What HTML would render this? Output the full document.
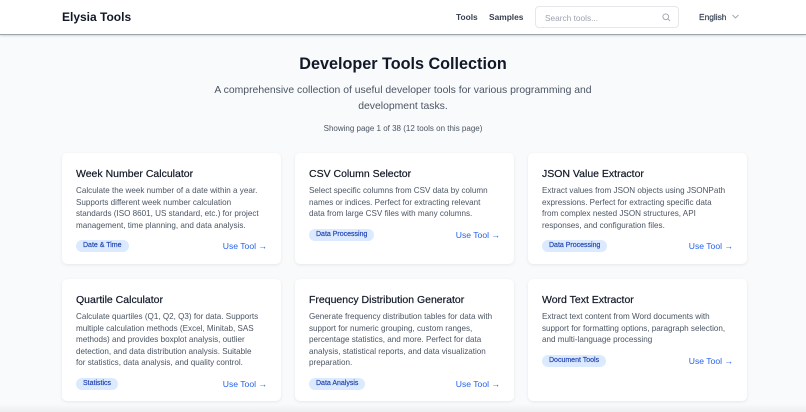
<!DOCTYPE html>
<html><head><meta charset="utf-8"><style>
*{box-sizing:border-box;margin:0;padding:0}
body{width:806px;height:412px;overflow:hidden;background:#f9fafb;font-family:"Liberation Sans",sans-serif;color:#111827;position:relative}
.hdr{height:35px;background:#fff;border-bottom:1px solid #9ca3af;box-shadow:0 1px 2px rgba(0,0,0,.15);position:relative}
.logo{position:absolute;left:62px;top:10px;font-size:12px;font-weight:bold;color:#111827}
.nav{position:absolute;top:12px;font-size:8.4px;font-weight:bold;color:#374151}
.search{position:absolute;left:535px;top:6px;width:144px;height:22px;border:1px solid #e5e7eb;border-radius:4px;background:#fff}
.search span{position:absolute;left:9px;top:6px;font-size:8.3px;color:#9ca3af}
.search svg{position:absolute;right:7px;top:6px}
h1{position:absolute;top:55px;left:0;width:806px;text-align:center;font-size:16.2px;font-weight:bold;color:#111827}
.sub{position:absolute;top:83px;left:213px;width:380px;text-align:center;font-size:10.4px;line-height:16px;color:#4b5563}
.show{position:absolute;top:124px;left:0;width:806px;text-align:center;font-size:8px;color:#4b5563}
.card{position:absolute;width:219px;background:#fff;border-radius:5px;box-shadow:0 1px 3px rgba(0,0,0,.08);padding:14px 14px 0}
.card h3{font-size:10.5px;font-weight:normal;color:#111827;line-height:14px;margin-bottom:4px;-webkit-text-stroke:.2px #111827}
.card p{font-size:8.1px;line-height:11.5px;color:#4b5563;width:184px}
.ft{display:flex;justify-content:space-between;align-items:center;margin-top:9px}
.tag{background:#dbeafe;color:#1e40af;font-size:7px;border-radius:6px;padding:2px 7px;line-height:8px;-webkit-text-stroke:.15px #1e40af}
.use{color:#2563eb;font-size:8.6px;margin-right:0px}
</style></head><body>
<div class="hdr">
<div class="logo">Elysia Tools</div>
<div class="nav" style="left:456px">Tools</div>
<div class="nav" style="left:489px">Samples</div>
<div class="search"><span>Search tools...</span><svg width="9" height="9" viewBox="0 0 10 10"><circle cx="4.2" cy="4.2" r="3.2" fill="none" stroke="#9ca3af" stroke-width="1"/><path d="M6.6 6.6L9 9" stroke="#9ca3af" stroke-width="1"/></svg></div>
<div class="nav" style="left:699px;font-weight:normal;color:#374151;-webkit-text-stroke:.2px #374151">English</div>
<svg style="position:absolute;left:732px;top:14px" width="7" height="5" viewBox="0 0 7 5"><path d="M.5 1L3.5 4L6.5 1" fill="none" stroke="#9ca3af" stroke-width=".9"/></svg>
</div>
<h1>Developer Tools Collection</h1>
<div class="sub">A comprehensive collection of useful developer tools for various programming and development tasks.</div>
<div class="show">Showing page 1 of 38 (12 tools on this page)</div>

<div class="card" style="left:62px;top:153px;height:111px"><h3>Week Number Calculator</h3><p>Calculate the week number of a date within a year. Supports different week number calculation standards (ISO 8601, US standard, etc.) for project management, time planning, and data analysis.</p><div class="ft"><span class="tag">Date &amp; Time</span><span class="use">Use Tool →</span></div></div>
<div class="card" style="left:295px;top:153px;height:111px"><h3>CSV Column Selector</h3><p>Select specific columns from CSV data by column names or indices. Perfect for extracting relevant<br>data from large CSV files with many columns.</p><div class="ft"><span class="tag">Data Processing</span><span class="use">Use Tool →</span></div></div>
<div class="card" style="left:528px;top:153px;height:111px"><h3>JSON Value Extractor</h3><p>Extract values from JSON objects using JSONPath expressions. Perfect for extracting specific data<br>from complex nested JSON structures, API<br>responses, and configuration files.</p><div class="ft"><span class="tag">Data Processing</span><span class="use">Use Tool →</span></div></div>

<div class="card" style="left:62px;top:279px;height:122px"><h3>Quartile Calculator</h3><p>Calculate quartiles (Q1, Q2, Q3) for data. Supports multiple calculation methods (Excel, Minitab, SAS methods) and provides boxplot analysis, outlier detection, and data distribution analysis. Suitable for statistics, data analysis, and quality control.</p><div class="ft"><span class="tag">Statistics</span><span class="use">Use Tool →</span></div></div>
<div class="card" style="left:295px;top:279px;height:122px"><h3>Frequency Distribution Generator</h3><p>Generate frequency distribution tables for data with support for numeric grouping, custom ranges, percentage statistics, and more. Perfect for data analysis, statistical reports, and data visualization preparation.</p><div class="ft"><span class="tag">Data Analysis</span><span class="use">Use Tool →</span></div></div>
<div class="card" style="left:528px;top:279px;height:122px"><h3>Word Text Extractor</h3><p>Extract text content from Word documents with support for formatting options, paragraph selection, and multi-language processing</p><div class="ft"><span class="tag">Document Tools</span><span class="use">Use Tool →</span></div></div>
<div style="position:absolute;left:0;top:404px;width:806px;height:8px;background:linear-gradient(#f9fafb,#eceef0)"></div>
</body></html>
